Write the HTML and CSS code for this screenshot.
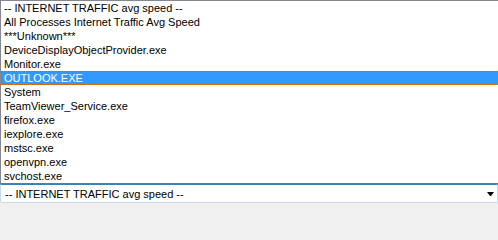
FILE: index.html
```html
<!DOCTYPE html>
<html>
<head>
<meta charset="utf-8">
<link rel="stylesheet" href="styles.css">
</head>
<body>
<div class="page">
  <div class="list">
    <div class="opt">-- INTERNET TRAFFIC avg speed --</div>
    <div class="opt">All Processes Internet Traffic Avg Speed</div>
    <div class="opt">***Unknown***</div>
    <div class="opt">DeviceDisplayObjectProvider.exe</div>
    <div class="opt">Monitor.exe</div>
    <div class="opt selected">OUTLOOK.EXE</div>
    <div class="opt">System</div>
    <div class="opt">TeamViewer_Service.exe</div>
    <div class="opt">firefox.exe</div>
    <div class="opt">iexplore.exe</div>
    <div class="opt">mstsc.exe</div>
    <div class="opt">openvpn.exe</div>
    <div class="opt">svchost.exe</div>
  </div>
  <div class="combo">
    <span class="combo-text">-- INTERNET TRAFFIC avg speed --</span>
    <svg class="arrow" width="7" height="4" viewBox="0 0 7 4"><polygon points="0,0 7,0 4,4 3,4" fill="#000"/></svg>
  </div>
</div>
</body>
</html>
```
FILE: styles.css
```css
html, body {
  margin: 0;
  padding: 0;
  background: #f0f0f0;
}
.page {
  width: 498px;
  height: 208px;
  overflow: hidden;
  font-family: "Liberation Sans", Arial, sans-serif;
  font-size: 11px;
  color: #000;
}
.list {
  width: 520px;
  background: #fff;
  border-top: 1px solid #828790;
  border-left: 1px solid #828790;
  border-bottom: 1px solid #6f7680;
  box-sizing: content-box;
}
.opt {
  height: 14px;
  line-height: 14px;
  padding-left: 3px;
  white-space: nowrap;
  box-sizing: border-box;
}
.opt.selected {
  background: #3399ff;
  color: #fff;
  border: 1px dotted #cc6600;
  padding-left: 2px;
  line-height: 12px;
}
.combo {
  height: 19px;
  box-sizing: border-box;
  background: #fff;
  border: 1px solid #c5daed;
  border-top-color: #3c7fb1;
  border-radius: 0 0 2px 2px;
  display: flex;
  align-items: center;
  justify-content: space-between;
  padding: 0 2px 0 4px;
  width: 498px;
}
.combo-text {
  white-space: nowrap;
}
.arrow {
  display: block;
  margin-right: 1px;
}
```
